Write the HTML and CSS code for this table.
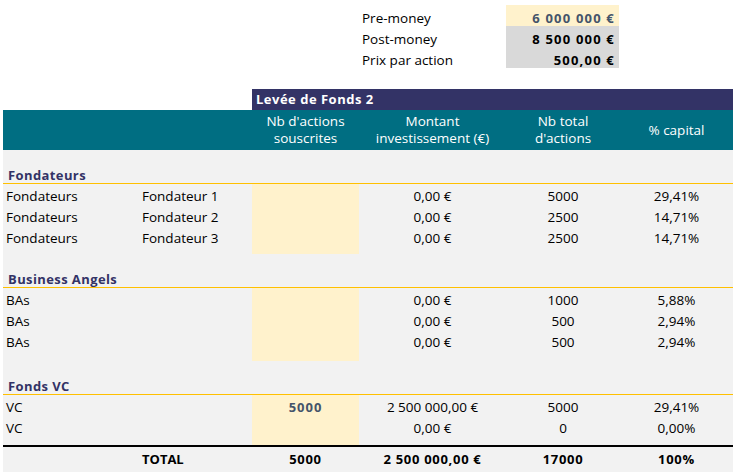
FILE: index.html
```html
<!DOCTYPE html>
<html lang="fr">
<head>
<meta charset="utf-8">
<title>Levée de Fonds 2</title>
<link rel="stylesheet" href="styles.css">
</head>
<body>
<div class="sheet">
  <div class="summary">
    <div class="row srow"><span class="slabel">Pre-money</span><span class="sval input">6 000 000 €</span></div>
    <div class="row srow"><span class="slabel">Post-money</span><span class="sval">8 500 000 €</span></div>
    <div class="row srow"><span class="slabel">Prix par action</span><span class="sval">500,00 €</span></div>
  </div>

  <div class="row band"><div class="band-title">Levée de Fonds 2</div></div>

  <div class="row head">
    <div></div><div></div>
    <div>Nb d'actions<br>souscrites</div>
    <div>Montant<br>investissement (€)</div>
    <div>Nb total<br>d'actions</div>
    <div>% capital</div>
  </div>

  <div class="body">
    <div class="section-title">Fondateurs</div>
    <div class="row data"><div class="l">Fondateurs</div><div class="l">Fondateur 1</div><div class="in"></div><div>0,00 €</div><div>5000</div><div>29,41%</div></div>
    <div class="row data"><div class="l">Fondateurs</div><div class="l">Fondateur 2</div><div class="in"></div><div>0,00 €</div><div>2500</div><div>14,71%</div></div>
    <div class="row data"><div class="l">Fondateurs</div><div class="l">Fondateur 3</div><div class="in"></div><div>0,00 €</div><div>2500</div><div>14,71%</div></div>
    <div class="row pad pad-s"><div></div><div></div><div class="in"></div></div>

    <div class="section-title">Business Angels</div>
    <div class="row data"><div class="l">BAs</div><div class="l"></div><div class="in"></div><div>0,00 €</div><div>1000</div><div>5,88%</div></div>
    <div class="row data"><div class="l">BAs</div><div class="l"></div><div class="in"></div><div>0,00 €</div><div>500</div><div>2,94%</div></div>
    <div class="row data"><div class="l">BAs</div><div class="l"></div><div class="in"></div><div>0,00 €</div><div>500</div><div>2,94%</div></div>
    <div class="row pad pad-l"><div></div><div></div><div class="in"></div></div>

    <div class="section-title">Fonds VC</div>
    <div class="row data"><div class="l">VC</div><div class="l"></div><div class="in filled">5000</div><div>2 500 000,00 €</div><div>5000</div><div>29,41%</div></div>
    <div class="row data"><div class="l">VC</div><div class="l"></div><div class="in"></div><div>0,00 €</div><div>0</div><div>0,00%</div></div>
    <div class="row pad pad-m"><div></div><div></div><div class="in"></div></div>

    <div class="row total"><div></div><div class="l">TOTAL</div><div class="n">5000</div><div class="n">2 500 000,00 €</div><div class="n">17000</div><div class="n">100%</div></div>
  </div>
</div>
</body>
</html>
```

FILE: styles.css
```css
body {
  margin: 0;
  background: #ffffff;
  color: #000000;
  font-family: "Open Sans", "Liberation Sans", sans-serif;
  font-size: 13.5px;
}

.sheet {
  margin-left: 3px;
  width: 730px;
}

.row {
  display: grid;
  grid-template-columns: 136px 113px 107px 147px 114px 113px;
}

/* summary block */
.summary {
  padding-top: 5px;
}

.srow {
  height: 21px;
}

.slabel {
  grid-column: 4;
  padding: 5px 0 0 3px;
  line-height: 16px;
}

.sval {
  grid-column: 5;
  margin-right: 1px;
  padding: 5px 4px 0 0;
  line-height: 16px;
  text-align: right;
  font-weight: 700;
  font-size: 13px;
  letter-spacing: 1.2px;
  background: #d9d9d9;
}

.sval.input {
  background: #fff2cc;
  color: #44546a;
}

/* navy band */
.band {
  margin-top: 21px;
  height: 21px;
}

.band-title {
  grid-column: 3 / -1;
  background: #333366;
  color: #ffffff;
  font-weight: 700;
  font-size: 13px;
  letter-spacing: 0.5px;
  line-height: 21px;
  padding-left: 4px;
}

/* teal header */
.head {
  height: 40px;
  background: #006e82;
  color: #ffffff;
  align-items: center;
  text-align: center;
  line-height: 17px;
}

/* body */
.body {
  background: #f2f2f2;
}

.section-title {
  height: 33px;
  border-bottom: 1px solid #ffc000;
  display: flex;
  align-items: flex-end;
  padding-left: 5px;
  font-weight: 700;
  font-size: 13px;
  letter-spacing: 0.4px;
  line-height: 15px;
  color: #333366;
}

.data {
  height: 21px;
  line-height: 17px;
}

.data > div,
.total > div {
  padding-top: 4px;
  text-align: center;
}

.data > .l,
.total > .l {
  text-align: left;
  padding-left: 3px;
}

.in {
  background: #fff2cc;
}

.in.filled {
  color: #44546a;
  font-weight: 700;
  font-size: 13px;
  letter-spacing: 1px;
}

.pad-s { height: 7px; }
.pad-l { height: 10px; }
.pad-m { height: 8px; }

.total {
  height: 25px;
  border-top: 2px solid #000000;
  line-height: 17px;
  font-weight: 700;
  font-size: 13px;
}

.total > .n {
  letter-spacing: 0.7px;
}
```
